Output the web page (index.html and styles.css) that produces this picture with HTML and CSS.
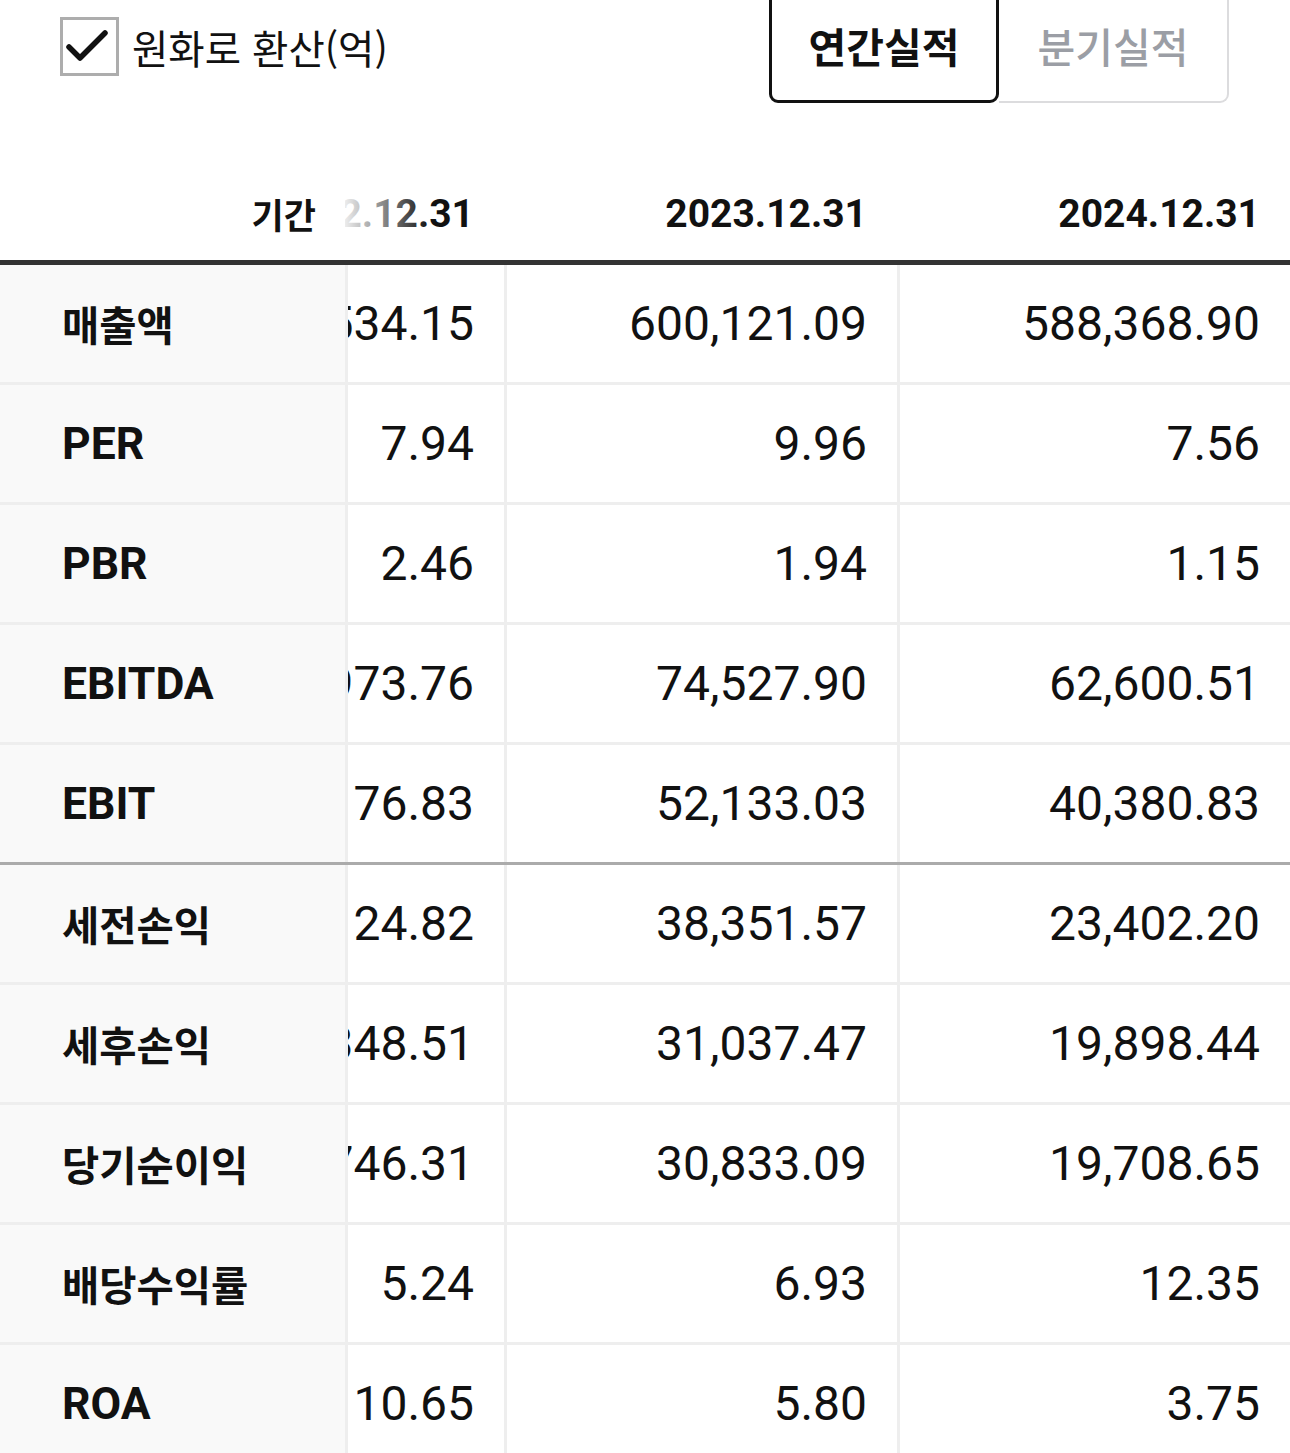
FILE: index.html
```html
<!DOCTYPE html>
<html lang="ko">
<head>
<meta charset="utf-8">
<title>실적</title>
<link rel="stylesheet" href="styles.css">
</head>
<body>
<div class="top">
  <label class="check">
    <span class="box">
      <svg class="tick" viewBox="0 0 53 53" width="53" height="53"><path d="M6 27 L17 38 L42 13" fill="none" stroke="#111" stroke-width="5.5" stroke-linecap="round" stroke-linejoin="round"/></svg>
    </span>
    <span class="check-text">원화로 환산(억)</span>
  </label>
  <div class="seg">
    <button class="seg-btn active">연간실적</button>
    <button class="seg-btn inactive">분기실적</button>
  </div>
</div>

<div class="table">
  <div class="row head">
    <div class="cell label ko-h">기간</div>
    <div class="cell c1"><span>2022.12.31</span></div>
    <div class="cell c2"><span>2023.12.31</span></div>
    <div class="cell c3"><span>2024.12.31</span></div>
  </div>
  <div class="row">
    <div class="cell label ko">매출액</div>
    <div class="cell c1"><span>616,534.15</span></div>
    <div class="cell c2"><span>600,121.09</span></div>
    <div class="cell c3"><span>588,368.90</span></div>
  </div>
  <div class="row">
    <div class="cell label">PER</div>
    <div class="cell c1"><span>7.94</span></div>
    <div class="cell c2"><span>9.96</span></div>
    <div class="cell c3"><span>7.56</span></div>
  </div>
  <div class="row">
    <div class="cell label">PBR</div>
    <div class="cell c1"><span>2.46</span></div>
    <div class="cell c2"><span>1.94</span></div>
    <div class="cell c3"><span>1.15</span></div>
  </div>
  <div class="row">
    <div class="cell label">EBITDA</div>
    <div class="cell c1"><span>81,973.76</span></div>
    <div class="cell c2"><span>74,527.90</span></div>
    <div class="cell c3"><span>62,600.51</span></div>
  </div>
  <div class="row sep">
    <div class="cell label">EBIT</div>
    <div class="cell c1"><span>55,176.83</span></div>
    <div class="cell c2"><span>52,133.03</span></div>
    <div class="cell c3"><span>40,380.83</span></div>
  </div>
  <div class="row">
    <div class="cell label ko">세전손익</div>
    <div class="cell c1"><span>45,124.82</span></div>
    <div class="cell c2"><span>38,351.57</span></div>
    <div class="cell c3"><span>23,402.20</span></div>
  </div>
  <div class="row">
    <div class="cell label ko">세후손익</div>
    <div class="cell c1"><span>36,348.51</span></div>
    <div class="cell c2"><span>31,037.47</span></div>
    <div class="cell c3"><span>19,898.44</span></div>
  </div>
  <div class="row">
    <div class="cell label ko">당기순이익</div>
    <div class="cell c1"><span>35,746.31</span></div>
    <div class="cell c2"><span>30,833.09</span></div>
    <div class="cell c3"><span>19,708.65</span></div>
  </div>
  <div class="row">
    <div class="cell label ko">배당수익률</div>
    <div class="cell c1"><span>5.24</span></div>
    <div class="cell c2"><span>6.93</span></div>
    <div class="cell c3"><span>12.35</span></div>
  </div>
  <div class="row">
    <div class="cell label">ROA</div>
    <div class="cell c1"><span>10.65</span></div>
    <div class="cell c2"><span>5.80</span></div>
    <div class="cell c3"><span>3.75</span></div>
  </div>
</div>
</body>
</html>
```

FILE: styles.css
```css
html, body {
  margin: 0;
  padding: 0;
  background: #fff;
}

body {
  font-family: Roboto, "Noto Sans CJK KR", sans-serif;
  color: #111;
  overflow: hidden;
}

/* top bar */
.top {
  display: flex;
  justify-content: space-between;
  align-items: flex-start;
  height: 104px;
  padding: 0 61px 0 60px;
}

.check {
  display: flex;
  align-items: center;
  gap: 13px;
  margin-top: 17px;
}

.box {
  width: 53px;
  height: 53px;
  border: 3px solid #adadad;
  display: flex;
  align-items: center;
  justify-content: center;
  background: #fff;
}

.tick {
  display: block;
}

.check-text {
  font-family: "Noto Sans CJK KR", sans-serif;
  font-size: 39.5px;
  font-weight: 400;
  color: #111;
  line-height: 1;
}

.seg {
  display: flex;
  margin-top: -14px;
}

.seg-btn {
  width: 230px;
  height: 117px;
  box-sizing: border-box;
  background: #fff;
  font-family: "Noto Sans CJK KR", sans-serif;
  font-size: 41px;
  line-height: 1;
  padding: 2px 0 0 0;
  margin: 0;
  cursor: pointer;
}

.seg-btn.active {
  position: relative;
  z-index: 1;
  border: 3px solid #111;
  border-radius: 9px;
  color: #111;
  font-weight: 700;
}

.seg-btn.inactive {
  border: 2px solid #dcdcde;
  border-left: none;
  border-radius: 0 9px 9px 0;
  color: #9b9ea5;
  font-weight: 500;
}

/* table */
.table {
  width: 1290px;
}

.row {
  display: grid;
  grid-template-columns: 345px 159px 393px 393px;
  height: 120px;
  box-sizing: border-box;
  border-bottom: 3px solid #eeeeee;
}

.row.sep {
  border-bottom-color: #ababab;
}

.cell {
  display: flex;
  align-items: center;
  white-space: nowrap;
  min-width: 0;
}

.label {
  background: #f9f9f9;
  padding-left: 62px;
  font-size: 44.5px;
  font-weight: 700;
}

.label.ko {
  font-family: "Noto Sans CJK KR", sans-serif;
  font-size: 40.5px;
}

.c1, .c2, .c3 {
  justify-content: flex-end;
  border-left: 3px solid #eeeeee;
  padding-right: 30px;
  font-size: 48px;
  font-weight: 400;
}

.c1 {
  overflow: hidden;
}

/* header row */
.row.head {
  height: 161px;
  border-bottom: 5px solid #333;
}

.head .cell {
  align-items: flex-end;
  padding-bottom: 23px;
  line-height: 46px;
  border-left: none;
  font-size: 39px;
  font-weight: 700;
}

.head .label {
  position: relative;
  background: #fff;
  justify-content: flex-end;
  padding-left: 0;
  padding-right: 29px;
  font-family: "Noto Sans CJK KR", sans-serif;
  font-size: 35px;
}

.head .label::after {
  content: "";
  position: absolute;
  left: 100%;
  top: 0;
  bottom: 0;
  width: 85px;
  z-index: 1;
  background: linear-gradient(to right, rgba(255, 255, 255, 0.92) 0%, rgba(255, 255, 255, 0.6) 35%, rgba(255, 255, 255, 0) 100%);
}
```
